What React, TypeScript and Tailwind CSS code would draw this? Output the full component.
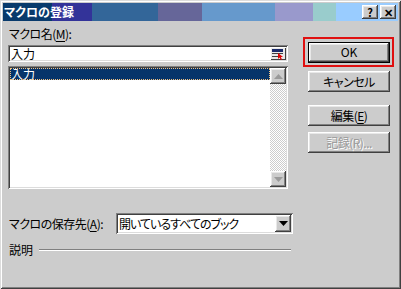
import React from "react";

const font = "font-['MS_UI_Gothic','Noto_Sans_CJK_JP',sans-serif] [font-feature-settings:'palt']";

const raised =
  "shadow-[inset_-1px_-1px_0_#404040,inset_1px_1px_0_#ffffff,inset_-2px_-2px_0_#808080,inset_2px_2px_0_#e8e8e8]";
const sunken =
  "shadow-[inset_1px_1px_0_#808080,inset_-1px_-1px_0_#ffffff,inset_2px_2px_0_#404040,inset_-2px_-2px_0_#dcdcdc]";

function U({ children }: { children: React.ReactNode }) {
  return <span className="underline underline-offset-2">{children}</span>;
}

function TitleButton({ children }: { children: React.ReactNode }) {
  return (
    <div
      className={`w-[16px] h-[14px] bg-[#cccccc] flex items-center justify-center text-[11px] font-bold leading-none text-black ${raised}`}
    >
      {children}
    </div>
  );
}

function Arrow({ up, color = "#a0a0a0" }: { up?: boolean; color?: string }) {
  return (
    <svg width="9" height="5" viewBox="0 0 9 5">
      {up ? (
        <path d="M4.5 0 L9 5 L0 5 Z" fill={color} />
      ) : (
        <path d="M0 0 L9 0 L4.5 5 Z" fill={color} />
      )}
    </svg>
  );
}

function Btn({
  children,
  disabled,
}: {
  children: React.ReactNode;
  disabled?: boolean;
}) {
  return (
    <div
      className={`w-[82px] h-[21px] bg-[#cccccc] flex items-center justify-center text-[12px] tracking-[-0.5px] ${raised} ${
        disabled ? "text-[#9a9a9a] [text-shadow:1px_1px_0_#ffffff]" : "text-black"
      }`}
    >
      {children}
    </div>
  );
}

export default function App() {
  return (
    <div
      className={`w-[401px] h-[289px] bg-[#cccccc] flex flex-col ${font} text-black overflow-hidden shadow-[inset_1px_1px_0_#dcdcdc,inset_-1px_-1px_0_#404040,inset_2px_2px_0_#ffffff,inset_-2px_-2px_0_#808080]`}
    >
      {/* title bar */}
      <div className="mx-[3px] mt-[3px] h-[18px] flex items-center bg-[linear-gradient(to_right,#083a6c_0px_49px,#333399_49px_89px,#336699_89px_155px,#666699_155px_199px,#6699cc_199px_272px,#9999cc_272px_310px,#99cccc_310px_333px,#99ccff_333px)]">
        <span className="ml-[1px] text-white font-bold text-[12px] leading-none">
          マクロの登録
        </span>
        <div className="ml-auto mr-[2px] flex gap-[2px]">
          <TitleButton>?</TitleButton>
          <TitleButton>✕</TitleButton>
        </div>
      </div>

      <div className="flex">
        {/* left column */}
        <div className="ml-[8px] w-[285px] flex flex-col">
          <div className="mt-[6px] h-[14px] text-[12px] leading-[14px] ml-[1px] tracking-[-0.5px]">
            マクロ名(<U>M</U>):
          </div>
          <div
            className={`mt-[4px] w-[280px] h-[17px] bg-white flex items-center pl-[3px] pr-[2px] ${sunken}`}
          >
            <span className="text-[12px] leading-none">入力</span>
            <svg className="ml-auto" width="15" height="12" viewBox="0 0 15 12">
              <rect x="0" y="0" width="15" height="12" fill="#e8e8e8" />
              <rect x="1" y="1" width="11" height="3" fill="#1a2a6a" />
              <rect x="1" y="5" width="11" height="1" fill="#404040" />
              <rect x="1" y="8" width="6" height="1" fill="#404040" />
              <rect x="0" y="11" width="15" height="1" fill="#404040" />
              <rect x="14" y="0" width="1" height="12" fill="#404040" />
              <path d="M7 5 L7 11 L8.5 9.5 L10 12 L11 11.5 L9.8 9 L12 9 Z" fill="#e00000" />
            </svg>
          </div>
          <div
            className={`mt-[4px] w-[280px] h-[123px] bg-white flex p-[2px] ${sunken}`}
          >
            <div className="flex-1">
              <div className="h-[12px] bg-[#06346a] text-white text-[12px] leading-[12px] pl-[1px] outline-1 outline-dotted outline-[#f0c080] -outline-offset-1">
                入力
              </div>
            </div>
            <div className="w-[16px] flex flex-col">
              <div
                className={`h-[16px] bg-[#cccccc] flex items-center justify-center ${raised}`}
              >
                <Arrow up color="#9a9a9a" />
              </div>
              <div className="flex-1 bg-[repeating-conic-gradient(#ffffff_0_25%,#cccccc_0_50%)] bg-[length:2px_2px]" />
              <div
                className={`h-[16px] bg-[#cccccc] flex items-center justify-center ${raised}`}
              >
                <Arrow color="#9a9a9a" />
              </div>
            </div>
          </div>

          <div className="mt-[24px] h-[21px] flex items-center">
            <span className="ml-[1px] text-[12px] leading-none tracking-[-0.5px]">
              マクロの保存先(<U>A</U>):
            </span>
            <div
              className={`ml-auto w-[177px] h-[21px] bg-white flex items-center p-[2px] ${sunken}`}
            >
              <span className="pl-[1px] text-[12px] leading-none tracking-[-1px]">
                開いているすべてのブック
              </span>
              <div
                className={`ml-auto w-[16px] h-[17px] bg-[#cccccc] flex items-center justify-center ${raised}`}
              >
                <Arrow color="#000000" />
              </div>
            </div>
          </div>

          <div className="mt-[9px] h-[14px] flex items-center">
            <span className="ml-[1px] text-[12px] leading-none">説明</span>
            <div className="ml-[6px] mr-[2px] flex-1 h-[2px] border-t border-t-[#808080] border-b border-b-white" />
          </div>
        </div>

        {/* right column */}
        <div className="ml-[10px] flex flex-col">
          <div className="mt-[16px] w-[91px] h-[30px] border-2 border-[#e01010] flex items-center pl-[3px]">
            <div className="border border-black">
              <div
                className={`w-[80px] h-[19px] bg-[#cccccc] flex items-center justify-center text-[12px] ${raised}`}
              >
                OK
              </div>
            </div>
          </div>
          <div className="mt-[4px] ml-[5px] flex flex-col">
            <Btn>キャンセル</Btn>
            <div className="mt-[13px]">
              <Btn>
                編集(<U>E</U>)
              </Btn>
            </div>
            <div className="mt-[6px]">
              <Btn disabled>記録(R)...</Btn>
            </div>
          </div>
        </div>
      </div>
    </div>
  );
}
